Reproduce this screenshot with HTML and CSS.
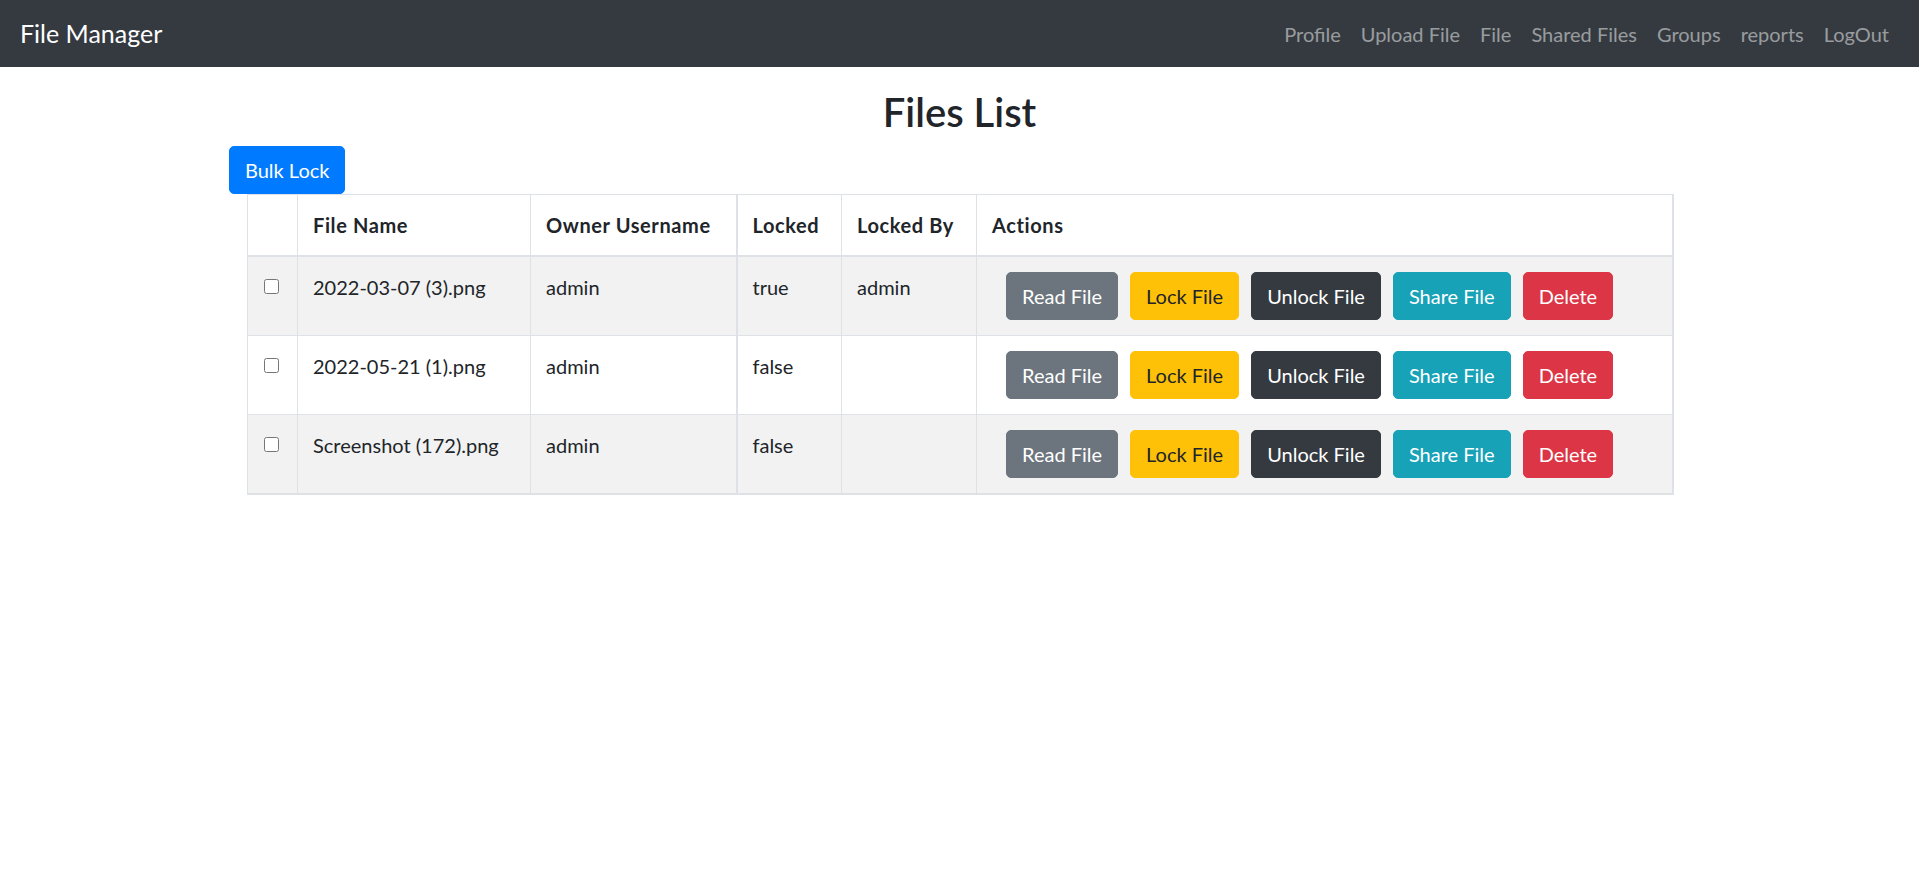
FILE: index.html
```html
<!DOCTYPE html>
<html lang="en">
<head>
<meta charset="utf-8">
<title>File Manager</title>
<link rel="stylesheet" href="styles.css">
</head>
<body>
<nav class="navbar">
  <a class="brand" href="#">File Manager</a>
  <ul class="nav-links">
    <li><a href="#">Profile</a></li>
    <li><a href="#">Upload File</a></li>
    <li><a href="#">File</a></li>
    <li><a href="#">Shared Files</a></li>
    <li><a href="#">Groups</a></li>
    <li><a href="#">reports</a></li>
    <li><a href="#">LogOut</a></li>
  </ul>
</nav>
<main class="container">
  <h2 class="title">Files List</h2>
  <button class="btn btn-primary bulk">Bulk Lock</button>
  <table class="files">
    <colgroup>
      <col class="c-check">
      <col class="c-name">
      <col class="c-owner">
      <col class="c-locked">
      <col class="c-by">
      <col class="c-actions">
    </colgroup>
    <thead>
      <tr>
        <th></th>
        <th>File Name</th>
        <th>Owner Username</th>
        <th class="sep">Locked</th>
        <th>Locked By</th>
        <th>Actions</th>
      </tr>
    </thead>
    <tbody>
      <tr class="odd">
        <td><input type="checkbox" class="check"></td>
        <td>2022-03-07 (3).png</td>
        <td>admin</td>
        <td class="sep">true</td>
        <td>admin</td>
        <td><div class="actions"><button class="btn btn-secondary">Read File</button><button class="btn btn-warning">Lock File</button><button class="btn btn-dark">Unlock File</button><button class="btn btn-info">Share File</button><button class="btn btn-danger">Delete</button></div></td>
      </tr>
      <tr>
        <td><input type="checkbox" class="check"></td>
        <td>2022-05-21 (1).png</td>
        <td>admin</td>
        <td class="sep">false</td>
        <td></td>
        <td><div class="actions"><button class="btn btn-secondary">Read File</button><button class="btn btn-warning">Lock File</button><button class="btn btn-dark">Unlock File</button><button class="btn btn-info">Share File</button><button class="btn btn-danger">Delete</button></div></td>
      </tr>
      <tr class="odd">
        <td><input type="checkbox" class="check"></td>
        <td>Screenshot (172).png</td>
        <td>admin</td>
        <td class="sep">false</td>
        <td></td>
        <td><div class="actions"><button class="btn btn-secondary">Read File</button><button class="btn btn-warning">Lock File</button><button class="btn btn-dark">Unlock File</button><button class="btn btn-info">Share File</button><button class="btn btn-danger">Delete</button></div></td>
      </tr>
    </tbody>
  </table>
</main>
</body>
</html>
```

FILE: styles.css
```css
* { box-sizing: border-box; }

body {
  margin: 0;
  font-family: Lato, "Open Sans", sans-serif;
  font-size: 20px;
  line-height: 30px;
  color: #212529;
  background: #fff;
}

.navbar {
  display: flex;
  justify-content: space-between;
  align-items: center;
  height: 67px;
  padding: 0 20px;
  background: #343a40;
}

.brand {
  font-size: 25px;
  line-height: 37px;
  color: #fff;
  text-decoration: none;
}

.nav-links {
  display: flex;
  list-style: none;
  margin: 0;
  padding: 0;
}

.nav-links a {
  display: block;
  padding: 0 10px;
  font-size: 20px;
  line-height: 30px;
  color: rgba(255, 255, 255, 0.5);
  text-decoration: none;
}

.container {
  width: 1425px;
  margin: 0 auto;
}

.title {
  margin: 21px 0 10px;
  text-align: center;
  font-size: 40px;
  line-height: 48px;
  font-weight: 600;
}

.btn {
  display: inline-block;
  font-family: inherit;
  font-size: 20px;
  line-height: 30px;
  padding: 8px 15px;
  border: 1px solid transparent;
  border-radius: 5px;
  color: #fff;
  cursor: pointer;
  white-space: nowrap;
}

.bulk {
  display: block;
  margin-left: -18px;
}

.btn-primary { background: #007bff; border-color: #007bff; }
.btn-secondary { background: #6c757d; border-color: #6c757d; }
.btn-warning { background: #ffc107; border-color: #ffc107; color: #212529; }
.btn-dark { background: #343a40; border-color: #343a40; }
.btn-info { background: #17a2b8; border-color: #17a2b8; }
.btn-danger { background: #dc3545; border-color: #dc3545; }

.files {
  width: 1425px;
  border-collapse: collapse;
  table-layout: fixed;
  border-right: 2px solid #dee2e6;
  border-bottom: 2px solid #dee2e6;
}

.c-check { width: 50px; }
.c-name { width: 233px; }
.c-owner { width: 206px; }
.c-locked { width: 105px; }
.c-by { width: 135px; }
.c-actions { width: 696px; }

.files th,
.files td {
  padding: 15px;
  border: 1px solid #dee2e6;
  text-align: left;
  vertical-align: top;
}

.files th {
  font-weight: 700;
  letter-spacing: 0.03em;
  border-bottom: 2px solid #dee2e6;
  vertical-align: bottom;
}

.files .sep { border-left: 2px solid #dee2e6; }

.files tr.odd td { background: #f2f2f2; }

.check {
  display: block;
  width: 15px;
  height: 15px;
  margin: 7px 0 0 1px;
}

.actions {
  display: flex;
  gap: 12px;
  margin-left: 14px;
}
```
